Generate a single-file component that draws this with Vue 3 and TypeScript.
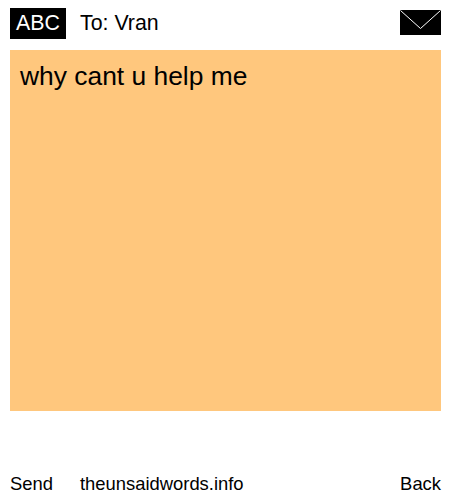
<script setup lang="ts">
const recipient: string = 'Vran'
</script>

<template>
  <div class="screen">
    <header class="top">
      <span class="mode">ABC</span>
      <span class="to">To: {{ recipient }}</span>
      <svg class="env" width="41" height="25" viewBox="0 0 41 25">
        <rect width="41" height="25" fill="#000" />
        <path d="M0.5 0.5 L20.5 18.5 L40.5 0.5" fill="none" stroke="#fff" stroke-width="1" />
      </svg>
    </header>
    <main class="note">why cant u help me</main>
    <footer class="bottom">
      <span class="send">Send</span>
      <span class="site">theunsaidwords.info</span>
      <span class="back">Back</span>
    </footer>
  </div>
</template>

<style>
html, body { margin: 0; background: #fff; }
</style>

<style scoped>
.screen {
  width: 450px;
  height: 500px;
  box-sizing: border-box;
  padding: 8px 9px 0 10px;
  display: flex;
  flex-direction: column;
  font-family: "Liberation Sans", Arial, sans-serif;
  color: #000;
}
.top {
  display: flex;
  align-items: center;
  height: 31px;
  font-size: 21.33px;
}
.mode {
  background: #000;
  color: #fff;
  width: 56px;
  height: 31px;
  line-height: 30px;
  text-align: center;
}
.to { margin-left: 14px; flex: 1; }
.env { display: block; margin-top: -2px; }
.note {
  margin-top: 11px;
  height: 361px;
  background: #ffc77d;
  font-size: 26.4px;
  line-height: 31px;
  padding: 11px 10px;
  box-sizing: border-box;
}
.bottom {
  display: flex;
  margin-top: 62px;
  font-size: 18.4px;
  line-height: 22px;
}
.send { width: 70px; }
.site { flex: 1; }
</style>
